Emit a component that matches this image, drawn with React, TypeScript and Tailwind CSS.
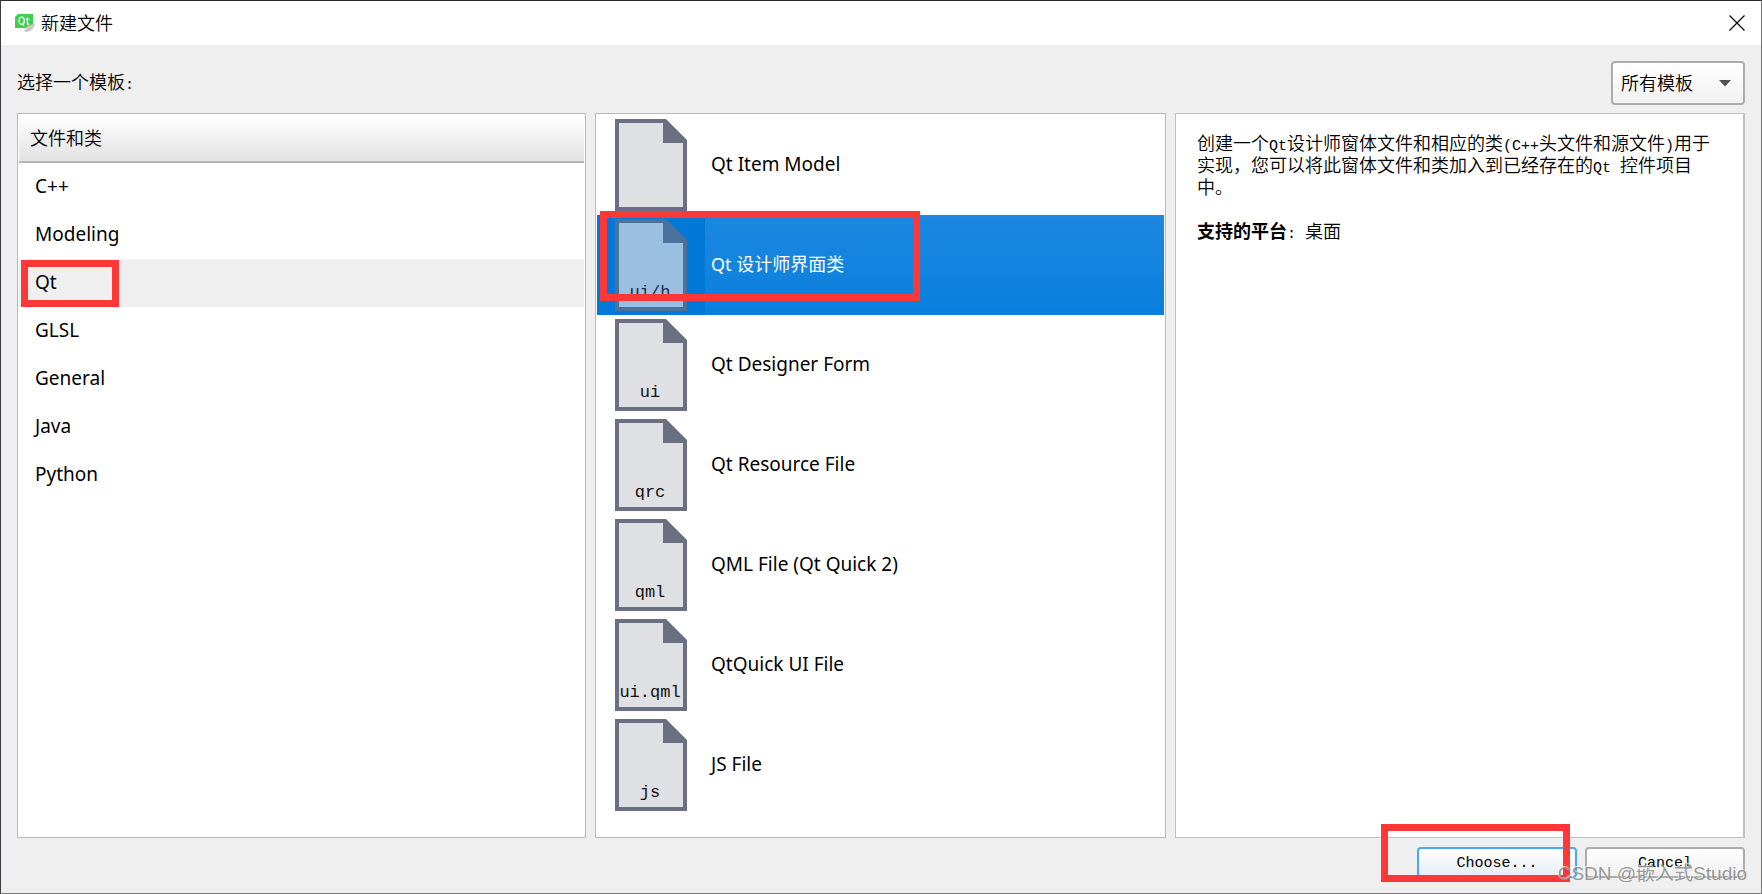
import type { ReactNode } from "react";

const categories = ["C++", "Modeling", "Qt", "GLSL", "General", "Java", "Python"];

const templates = [
  { name: "Qt Item Model", ext: "" },
  { name: "Qt 设计师界面类", ext: "ui/h" },
  { name: "Qt Designer Form", ext: "ui" },
  { name: "Qt Resource File", ext: "qrc" },
  { name: "QML File (Qt Quick 2)", ext: "qml" },
  { name: "QtQuick UI File", ext: "ui.qml" },
  { name: "JS File", ext: "js" },
];

function FileIcon({ ext, selected }: { ext: string; selected: boolean }) {
  const edge = selected ? "#4b729c" : "#6a7081";
  const fill = selected ? "#9bbfe0" : "#dfe0e4";
  return (
    <svg width="72" height="92" viewBox="0 0 72 92" className="shrink-0" aria-hidden="true">
      <path d="M0 0H51L72 21V92H0Z" fill={edge} />
      <path d="M4 4H48V24H68V88H4Z" fill={fill} />
      <text
        x="35"
        y="78"
        textAnchor="middle"
        fontSize="17"
        fontFamily="'Liberation Mono', monospace"
        fill={selected ? "#12324f" : "#111111"}
      >
        {ext}
      </text>
    </svg>
  );
}

function QtLogo() {
  return (
    <svg width="21" height="19" viewBox="0 0 21 19" aria-hidden="true">
      <path d="M3 0H18V11L15 14H0V3Z" fill="#41cd52" />
      <g fill="none" stroke="#fff" strokeWidth="1.3">
        <ellipse cx="6.7" cy="6.8" rx="2.6" ry="3.6" />
        <path d="M7.4 9.6l1.6 2.2M12.4 3.4v5.8q0 1.2 1.9 1M10.8 5.4h3.6" />
      </g>
      <path d="M20.500 7.500C20 13 18 18 11 18C9 18 9 15 11 13.500C14 11.500 18 11 20.500 7.500Z" fill="#d4d4d4" />
      <path d="M18.500 10.500C16.500 14 13.500 15.500 10 17.500" stroke="#a9a9a9" strokeWidth="0.8" fill="none" />
    </svg>
  );
}

function Mono({ children }: { children: ReactNode }) {
  return <span className="font-['Liberation_Mono',monospace] text-[15px] leading-0 font-normal">{children}</span>;
}

function Marker({ className }: { className: string }) {
  return <span aria-hidden="true" className={`pointer-events-none absolute z-10 border-7 border-[#fd3837] ${className}`} />;
}

export default function App() {
  return (
    <div className="flex min-h-screen flex-col border border-t-[#2b2a2d] border-r-[#777777] border-b-[#777777] border-l-[#3b3a40] bg-[#efefef] font-['Noto_Sans','Noto_Sans_CJK_SC',sans-serif] text-[18px] leading-6 font-normal text-black">
      <header className="flex h-11 shrink-0 items-center bg-white pr-4 pl-3.5">
        <QtLogo />
        <h1 className="ml-[5px] flex-1 pb-0.5 font-['Noto_Sans_CJK_SC',sans-serif] font-[350]">新建文件</h1>
        <button type="button" aria-label="关闭" className="flex h-6 w-4 items-center justify-center">
          <svg width="16" height="16" viewBox="0 0 16 16" stroke="#000" strokeWidth="1.2" aria-hidden="true">
            <path d="M0.500 0.500L15.500 15.500M15.500 0.500L0.500 15.500" />
          </svg>
        </button>
      </header>

      <main className="flex flex-1 flex-col px-4 pt-4 pb-[15px]">
        <div className="mb-2 flex h-11 items-center justify-between">
          <label htmlFor="filter" className="pb-1 font-['Noto_Sans_CJK_SC',sans-serif] font-[350]">
            选择一个模板<Mono>:</Mono>
          </label>
          <div className="relative">
            <select
              id="filter"
              className="h-11 w-[134px] appearance-none rounded-[4px] border-2 border-[#acacac] bg-linear-to-b from-white to-[#f1f1f1] pb-0.5 pl-2 font-['Noto_Sans_CJK_SC',sans-serif] text-[18px] font-[350]"
            >
              <option>所有模板</option>
            </select>
            <svg width="12" height="7" viewBox="0 0 12 7" className="pointer-events-none absolute top-[19px] right-3.5" aria-hidden="true">
              <path d="M0 0H12L6 6.500Z" fill="#505050" />
            </svg>
          </div>
        </div>

        <div className="mb-[9px] grid flex-1 grid-cols-[569fr_571fr_570fr] gap-[9px]">
          <section className="border border-[#b9b9b9] bg-white p-px">
            <h2 className="flex h-12 items-center border-b-2 border-[#b5b5b5] bg-linear-to-b from-white to-[#e2e2e2] px-[11px] pb-0.5 font-['Noto_Sans_CJK_SC',sans-serif] font-[350]">
              文件和类
            </h2>
            <ul>
              {categories.map((name) => (
                <li key={name} className={name === "Qt" ? "relative bg-[#efefef]" : ""}>
                  <button type="button" className="flex h-12 w-full items-center px-4 pb-0.5 text-left text-[19px]">
                    {name}
                  </button>
                  {name === "Qt" && <Marker className="top-px left-0.5 h-[47px] w-[98px]" />}
                </li>
              ))}
            </ul>
          </section>

          <section className="border border-[#b9b9b9] bg-white p-px">
            <ul>
              {templates.map(({ name, ext }) => {
                const selected = ext === "ui/h";
                return (
                  <li key={name} className={selected ? "relative bg-[#0078d7] text-white" : ""}>
                    <button type="button" className="flex h-[100px] w-full items-center pl-[18px] text-left">
                      <FileIcon ext={ext} selected={selected} />
                      <span
                        className={`ml-[18px] flex h-full flex-1 items-center pb-0.5 pl-1.5 ${
                          selected ? "bg-linear-to-b from-[#1c88e0] to-[#087fdd] text-[18px]" : "text-[19px]"
                        }`}
                      >
                        {name}
                      </span>
                    </button>
                    {selected && <Marker className="-top-1 left-[3px] h-[90px] w-[320px]" />}
                  </li>
                );
              })}
            </ul>
          </section>

          <section className="border border-r-2 border-[#c1c1c1] bg-white px-[21px] py-[17px] font-['Noto_Sans_CJK_SC',sans-serif] leading-[22px] font-[350]">
            <p>
              创建一个<Mono>Qt</Mono>设计师窗体文件和相应的类<Mono>(C++</Mono>头文件和源文件<Mono>)</Mono>
              用于实现，您可以将此窗体文件和类加入到已经存在的<Mono>Qt </Mono>控件项目中。
            </p>
            <p className="mt-[22px]">
              <b className="font-bold">支持的平台</b>
              <Mono>: </Mono>桌面
            </p>
          </section>
        </div>

        <footer className="relative flex h-[31px] justify-end gap-2 font-['Liberation_Mono',monospace] text-[15px]">
          <button
            type="button"
            className="w-40 rounded-[4px] border-2 border-[#45a9f9] bg-linear-to-b from-white to-[#e6edf4] pt-0.5"
          >
            Choose...
          </button>
          <button
            type="button"
            className="w-40 rounded-[4px] border-2 border-[#adadad] bg-linear-to-b from-white to-[#f0f0f0] pt-0.5"
          >
            Cancel
          </button>
          <Marker className="-top-[23px] right-[175px] h-[58px] w-[189px]" />
          <span className="pointer-events-none absolute -right-0.5 -bottom-2 z-20 font-['Liberation_Sans','Noto_Sans_CJK_SC',sans-serif] text-[19px] leading-6 whitespace-nowrap text-[#8c8c8c]/90 [text-shadow:-1px_-1px_0_#ffffffaa]">
            CSDN @嵌入式Studio
          </span>
        </footer>
      </main>
    </div>
  );
}
